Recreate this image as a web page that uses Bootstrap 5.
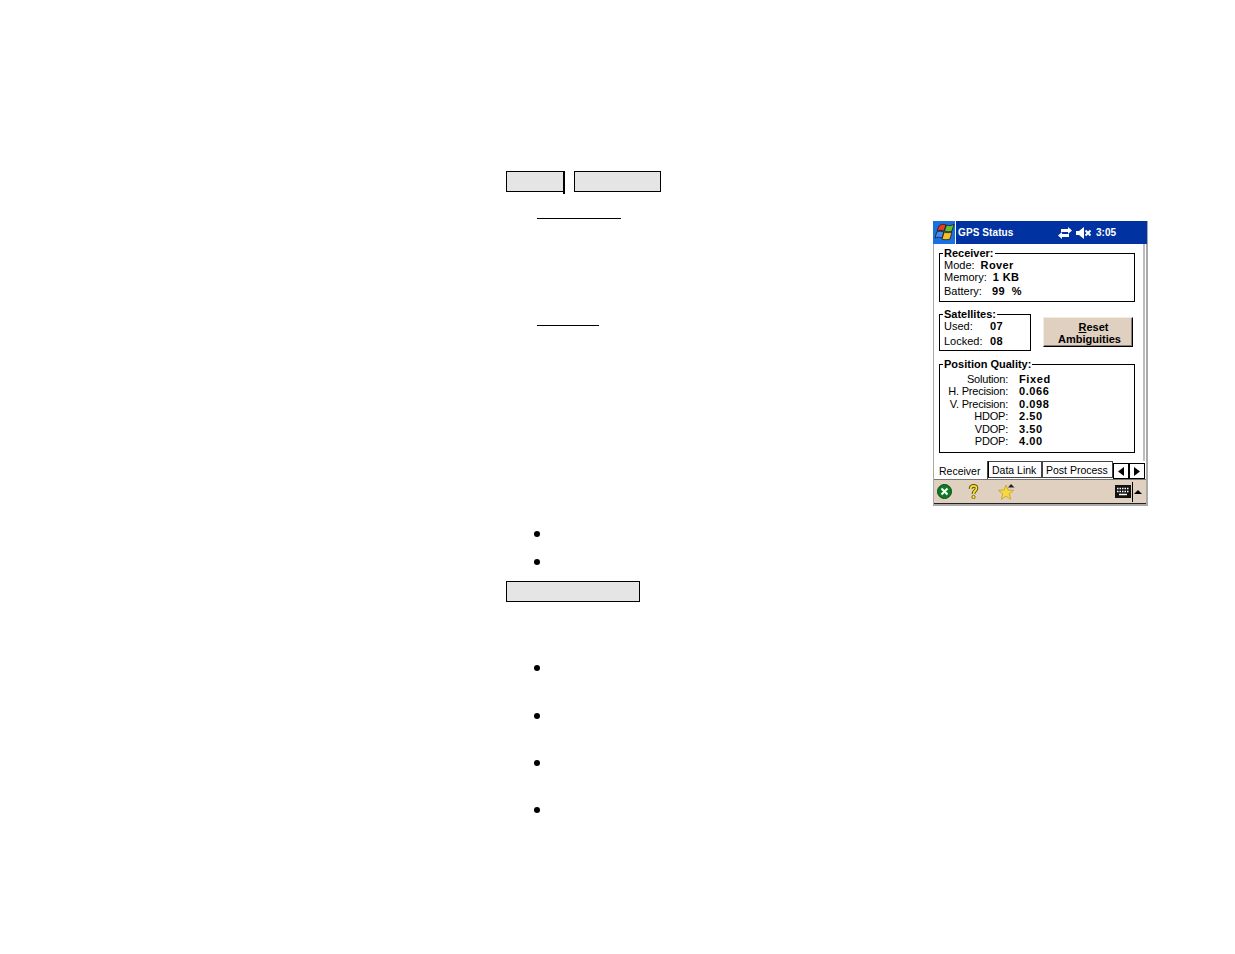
<!DOCTYPE html>
<html lang="en">
<head>
<meta charset="utf-8">
<title>GPS Status</title>
<link href="https://cdn.jsdelivr.net/npm/bootstrap@5.3.0/dist/css/bootstrap.min.css" rel="stylesheet">
<style>
body{background:#fff;margin:0;}
.doc{margin-left:506px;width:642px;padding-top:171px;}
.shade{background:#e5e5e5;border:1.5px solid #000;height:21px;}
.s1{width:59px;border-right-width:2px;position:relative;}
.s1::after{content:"";position:absolute;right:-2px;bottom:-3px;width:2px;height:2px;background:#000;}
.s2{width:87px;margin-left:9px;}
.s3{width:134px;margin-top:5px;}
.sect{margin-top:26px;height:288px;}
.rule{background:#000;height:1px;margin-left:31px;}
.r1{width:84px;}
.r2{width:62px;margin-top:106px;}
.dotrow{height:28px;padding-left:28px;}
.dot{width:6px;height:6px;border-radius:50%;background:#000;}
.firstdots{margin-top:14px;}
.gap1{margin-top:52px;}
.gap2{margin-top:20px;}
.gap3{margin-top:19px;}
.device{width:215px;height:285px;margin-top:3px;background:#fff;border:solid #a9a9a9;border-width:0 2px 2px 1px;font-family:"Liberation Sans",Arial,sans-serif;font-size:11px;color:#000;line-height:12.400px;}
.titlebar{height:23px;background:#0033a1;color:#fff;font-weight:700;font-size:10px;margin:0 -1px 0 -1px;}
.startbtn{width:23px;height:23px;background:#1c6fe0;border-right:1px solid #fff;}
.ttl{margin:1px 0 0 2px;letter-spacing:.1px;}
.tray{margin:1px 0 0 auto;padding-right:31px;}
.page{height:217px;border-right:2px solid #bdbdbd;margin-right:1px;padding:3.500px 0 0 5px;}
.gb{border:1px solid #000;margin:0;padding:0 0 0 4px;min-width:0;}
.gb legend{float:none;width:auto;font-size:11px;font-weight:700;line-height:11px;margin:0 0 0 -1px;padding:0 1px;}
.g1{width:196px;height:54.500px;}
.g2{width:92px;height:42px;}
.g3{width:196px;height:94px;margin-top:8px;}
.b{font-weight:700;letter-spacing:.4px;}
.row2gap{margin-top:1.600px;}
.kv{gap:6px;}
.kvw{gap:10px;}
.mid{margin-top:7px;}
.satgrid{display:grid;grid-template-columns:46px 1fr;row-gap:2.600px;}
.resetbtn{width:90px;height:30px;margin-left:12px;margin-top:15px;background:#dfd0c0;border:1px solid;border-color:#f4ece4 #000 #000 #f4ece4;box-shadow:inset -1px -1px 0 #8a7f74;font-size:11px;font-weight:700;line-height:12px;padding:2px 0 0 3px;text-align:center;border-radius:0;color:#000;}
.pq{display:grid;grid-template-columns:64px 1fr;column-gap:11px;padding-top:3px;}
.pq span:nth-child(odd){text-align:right;letter-spacing:-.2px;}
.pq span:nth-child(even){font-weight:700;letter-spacing:.6px;}
.tabs{height:18px;align-items:flex-start;padding-left:1px;font-size:10.500px;}
.tb{height:17px;border:1px solid #444;background:#fff;padding:0 3px;line-height:16px;white-space:nowrap;}
.tb.act{height:18px;width:53px;border:0;border-right:1px solid #444;line-height:21px;padding-left:4px;}
.t2{width:54px;border-left-color:#000;}
.t3{width:71px;}
.ar{width:16px;height:16px;margin-top:2px;border:1px solid #000;background:#fff;}
.toolbar{height:25px;background:#dfd0c0;border-top:1px solid #777;border-bottom:1px solid #222;}
.tool-l{gap:15px;padding-left:3px;}
.tool-r{margin-left:auto;padding-right:4px;}
.kbsep{width:1px;height:20px;background:#000;margin:0 1px 0 1px;}
.qmark{margin-left:1px;}
</style>
</head>
<body>
<div class="doc">
  <div class="d-flex">
    <div class="shade s1"></div>
    <div class="shade s2"></div>
  </div>
  <div class="sect d-flex justify-content-between">
    <div class="flex-grow-1">
      <div class="rule r1"></div>
      <div class="rule r2"></div>
    </div>
    <div class="device flex-shrink-0">
      <div class="titlebar d-flex align-items-center">
        <div class="startbtn d-flex align-items-center justify-content-center">
          <svg width="21" height="19" viewBox="0 0 21 19"><path d="M5 3c2-2 5-2 7-1l-2 6C8 7 5 7 3 8z" fill="#e8401c" stroke="#111" stroke-width=".7"/><path d="M12.500 2c2 1 5 1 7.500-1l-2 7c-2 1-5 1-7.500 0z" fill="#66c030" stroke="#111" stroke-width=".7"/><path d="M2.800 9c2-1 5-1 7 0L8 15c-2-1-5-1-7 0z" fill="#4a8ae8" stroke="#111" stroke-width=".7"/><path d="M10.300 9c2 1 5 1 7.500 0L16 16c-2.500 1-5.500 1-8 0z" fill="#f8c020" stroke="#111" stroke-width=".7"/></svg>
        </div>
        <span class="ttl">GPS Status</span>
        <div class="tray d-flex align-items-center">
          <svg width="14" height="13" viewBox="0 0 14 13"><path d="M3 2h7V0l4 3.500L10 7V5H3zM11 7H4V5L0 8.500 4 12v-2h7z" fill="#fff"/></svg>
          <svg class="ms-1" width="16" height="12" viewBox="0 0 16 12"><path d="M0 4h3l5-4v12L3 8H0z" fill="#fff"/><path d="M9.500 3.500l5 5M14.500 3.500l-5 5" stroke="#fff" stroke-width="2"/></svg>
          <span class="ms-1">3:05</span>
        </div>
      </div>
      <div class="page">
        <fieldset class="gb g1">
          <legend>Receiver:</legend>
          <div class="d-flex kv"><span>Mode:</span><span class="b">Rover</span></div>
          <div class="d-flex kv"><span>Memory:</span><span class="b">1 KB</span></div>
          <div class="d-flex kvw row2gap"><span>Battery:</span><span class="b">99&nbsp; %</span></div>
        </fieldset>
        <div class="d-flex">
          <fieldset class="gb g2 mid">
            <legend>Satellites:</legend>
            <div class="satgrid"><span>Used:</span><span class="b">07</span><span>Locked:</span><span class="b">08</span></div>
          </fieldset>
          <button type="button" class="btn resetbtn"><span class="d-block ps-2"><u>R</u>eset</span>Ambiguities</button>
        </div>
        <fieldset class="gb g3">
          <legend>Position Quality:</legend>
          <div class="pq">
            <span>Solution:</span><span>Fixed</span>
            <span>H. Precision:</span><span>0.066</span>
            <span>V. Precision:</span><span>0.098</span>
            <span>HDOP:</span><span>2.50</span>
            <span>VDOP:</span><span>3.50</span>
            <span>PDOP:</span><span>4.00</span>
          </div>
        </fieldset>
      </div>
      <div class="tabs d-flex">
        <div class="tb act">Receiver</div>
        <div class="tb t2">Data Link</div>
        <div class="tb t3">Post Process</div>
        <div class="ar d-flex align-items-center justify-content-center"><svg width="6" height="9" viewBox="0 0 6 9"><path d="M6 0v9L0 4.500z"/></svg></div>
        <div class="ar d-flex align-items-center justify-content-center"><svg width="6" height="9" viewBox="0 0 6 9"><path d="M0 0v9l6-4.500z"/></svg></div>
      </div>
      <div class="toolbar d-flex align-items-center">
        <div class="tool-l d-flex align-items-center">
          <svg width="15" height="15" viewBox="0 0 15 15"><circle cx="7.500" cy="7.500" r="7" fill="#0f7a24" stroke="#0a4a16"/><path d="M4.500 4.500l6 6M10.500 4.500l-6 6" stroke="#fff" stroke-width="2"/></svg>
          <svg class="qmark" width="11" height="15" viewBox="0 0 11 15"><path d="M2.500 5c0-4 6-4 6-1 0 3-3 2.500-3 6" fill="none" stroke="#5a4a00" stroke-width="3.600"/><path d="M2.500 5c0-4 6-4 6-1 0 3-3 2.500-3 6" fill="none" stroke="#f8e430" stroke-width="1.800"/><circle cx="5.500" cy="13" r="1.700" fill="#f8e430" stroke="#5a4a00" stroke-width=".7"/></svg>
          <svg class="ms-1" width="18" height="17" viewBox="0 0 18 17"><path d="M8 2l2 5 5.500.4-4.200 3.400 1.400 5.500L8 13.300l-4.700 3 1.400-5.500L.5 7.400 6 7z" fill="#f8d840" stroke="#c09820" stroke-width=".7"/><path d="M10 4.500l3-3.500 3.500 3.500z" fill="#222"/></svg>
        </div>
        <div class="tool-r d-flex align-items-center">
          <svg width="16" height="13" viewBox="0 0 16 13"><rect width="16" height="13" fill="#111"/><path d="M2 3.500h12M2 6.500h12" stroke="#fff" stroke-width="1.500" stroke-dasharray="1.500 1"/><path d="M4 9.500h8" stroke="#fff" stroke-width="1.500"/></svg>
          <div class="kbsep"></div>
          <svg width="8" height="4" viewBox="0 0 8 4"><path d="M0 4l4-4 4 4z"/></svg>
        </div>
      </div>
    </div>
  </div>
  <div class="firstdots">
    <div class="dotrow d-flex align-items-center"><div class="dot"></div></div>
    <div class="dotrow d-flex align-items-center"><div class="dot"></div></div>
  </div>
  <div class="shade s3"></div>
  <div class="dotrow d-flex align-items-center gap1"><div class="dot"></div></div>
  <div class="dotrow d-flex align-items-center gap2"><div class="dot"></div></div>
  <div class="dotrow d-flex align-items-center gap3"><div class="dot"></div></div>
  <div class="dotrow d-flex align-items-center gap3"><div class="dot"></div></div>
</div>
<script src="https://cdn.jsdelivr.net/npm/bootstrap@5.3.0/dist/js/bootstrap.bundle.min.js"></script>
</body>
</html>
